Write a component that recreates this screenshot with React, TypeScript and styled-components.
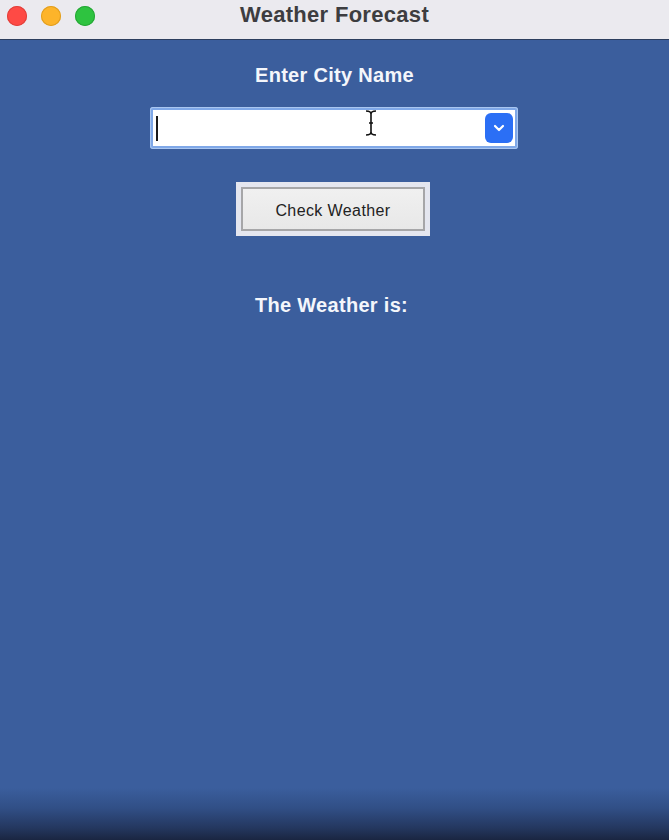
import React from "react";
import styled, { createGlobalStyle } from "styled-components";

const Global = createGlobalStyle`
  html, body { margin: 0; padding: 0; height: 100%; }
  body { font-family: "Liberation Sans", Arial, sans-serif; overflow: hidden; }
  #root { height: 100%; }
`;

const Window = styled.div`
  width: 669px;
  height: 840px;
  display: flex;
  flex-direction: column;
`;

const TitleBar = styled.div`
  height: 39px;
  flex: none;
  background: #ebeaef;
  border-bottom: 1px solid #2c3e5e;
  display: flex;
  align-items: center;
  position: relative;
  padding-left: 7px;
  gap: 14px;
`;

const Light = styled.span<{ $c: string; $b: string }>`
  width: 20px;
  height: 20px;
  border-radius: 50%;
  background: ${(p) => p.$c};
  box-shadow: inset 0 0 0 1px ${(p) => p.$b};
  margin-top: -8px;
`;

const Title = styled.div`
  position: absolute;
  left: 0;
  right: 0;
  top: 0;
  bottom: 0;
  display: flex;
  align-items: center;
  justify-content: center;
  font-weight: bold;
  font-size: 22px;
  letter-spacing: 0.3px;
  color: #3d3d40;
  padding-bottom: 9px;
  pointer-events: none;
`;

const Body = styled.div`
  flex: 1;
  background: linear-gradient(
    to bottom,
    #3b5e9d 0%,
    #3b5e9d 93.5%,
    #314f86 96%,
    #24375f 98.5%,
    #1a2541 100%
  );
  display: flex;
  flex-direction: column;
  align-items: center;
`;

const Label = styled.div<{ $top: number; $shift?: number }>`
  margin-top: ${(p) => p.$top}px;
  color: #f4f6fb;
  font-weight: bold;
  font-size: 20px;
  letter-spacing: 0.3px;
  line-height: 22px;
  margin-left: ${(p) => p.$shift ?? 0}px;
`;

const ComboRing = styled.div`
  margin-top: 21px;
  margin-left: -1px;
  width: 362px;
  height: 36px;
  padding: 3px;
  border-radius: 3px;
  background: #7fa8e8;
  box-shadow: 0 0 0 1px #a9c6f0 inset;
  display: flex;
`;

const ComboField = styled.div`
  flex: 1;
  background: #ffffff;
  display: flex;
  align-items: center;
  position: relative;
  padding: 0 2px 0 3px;
`;

const Caret = styled.span`
  width: 2px;
  height: 25px;
  background: #1a1a1a;
`;

const Spacer = styled.span`
  flex: 1;
`;

const DropButton = styled.span`
  width: 28px;
  height: 30px;
  border-radius: 6px;
  background: #2b6ff5;
  display: flex;
  align-items: center;
  justify-content: center;
`;

const IBeam = styled.svg`
  position: absolute;
  left: 211px;
  top: 0px;
`;

const ButtonFrame = styled.div`
  margin-top: 33px;
  margin-left: -3px;
  padding: 5px;
  background: #e4e6ef;
  display: flex;
`;

const Button = styled.button`
  width: 184px;
  height: 44px;
  border: 2px solid #a6a6a8;
  background: linear-gradient(#f0f0f0, #e8e8e8);
  font-family: "Liberation Sans", Arial, sans-serif;
  font-size: 16px;
  letter-spacing: 0.4px;
  color: #222;
  padding: 3px 0 0 0;
`;

export default function App() {
  return (
    <>
      <Global />
      <Window>
        <TitleBar>
          <Light $c="#fe4a45" $b="#e0413c" />
          <Light $c="#fdb42a" $b="#e09e20" />
          <Light $c="#2ec340" $b="#27a637" />
          <Title>Weather Forecast</Title>
        </TitleBar>
        <Body>
          <Label $top={24}>Enter City Name</Label>
          <ComboRing>
            <ComboField>
              <Caret />
              <Spacer />
              <DropButton>
                <svg width="12" height="8" viewBox="0 0 12 8">
                  <path d="M2 2 L6 6 L10 2" stroke="#fff" strokeWidth="2.2" fill="none" strokeLinecap="round" strokeLinejoin="round" />
                </svg>
              </DropButton>
              <IBeam width="14" height="26" viewBox="0 0 14 26">
                <path d="M2 1 Q7 1 7 4 Q7 1 12 1 M7 4 V22 Q7 25 2 25 M7 22 Q7 25 12 25 M5 13 H9" stroke="#111" strokeWidth="1.6" fill="none" />
              </IBeam>
            </ComboField>
          </ComboRing>
          <ButtonFrame>
            <Button>Check Weather</Button>
          </ButtonFrame>
          <Label $top={58} $shift={-6}>The Weather is:</Label>
        </Body>
      </Window>
    </>
  );
}
